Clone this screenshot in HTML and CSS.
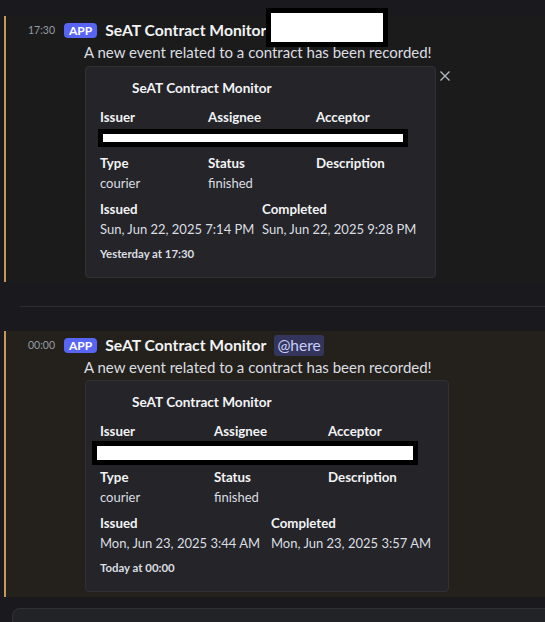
FILE: index.html
```html
<!DOCTYPE html>
<html>
<head>
<meta charset="utf-8">
<link rel="stylesheet" href="styles.css">
</head>
<body>
<div class="chat">
  <div class="spacer-top"></div>

  <div class="message m1">
    <div class="header">
      <span class="time">17:30</span>
      <span class="tag">APP</span>
      <span class="name">SeAT Contract Monitor</span>
    </div>
    <div class="redact redact-head"></div>
    <div class="content">A new event related to a contract has been recorded!</div>
    <div class="embed embed-a">
      <div class="author">SeAT Contract Monitor</div>
      <div class="fields">
        <div class="field third"><div class="fname">Issuer</div><div class="fval"></div></div>
        <div class="field third"><div class="fname">Assignee</div><div class="fval"></div></div>
        <div class="field third"><div class="fname">Acceptor</div><div class="fval"></div></div>
        <div class="field third"><div class="fname">Type</div><div class="fval">courier</div></div>
        <div class="field third"><div class="fname">Status</div><div class="fval">finished</div></div>
        <div class="field third"><div class="fname">Description</div><div class="fval"></div></div>
        <div class="field half"><div class="fname">Issued</div><div class="fval">Sun, Jun 22, 2025 7:14 PM</div></div>
        <div class="field half"><div class="fname">Completed</div><div class="fval">Sun, Jun 22, 2025 9:28 PM</div></div>
      </div>
      <div class="footer">Yesterday at 17:30</div>
      <div class="redact redact-a"></div>
      <button class="close" aria-label="Remove embed">
        <svg width="12" height="12" viewBox="0 0 12 12"><path d="M1.5 1.5L10.5 10.5M10.5 1.5L1.5 10.5" stroke="#b5bac1" stroke-width="1.3" fill="none"/></svg>
      </button>
    </div>
  </div>

  <div class="divider"><div class="line"></div></div>

  <div class="message m2">
    <div class="header">
      <span class="time">00:00</span>
      <span class="tag">APP</span>
      <span class="name">SeAT Contract Monitor</span>
      <span class="mention">@here</span>
    </div>
    <div class="content">A new event related to a contract has been recorded!</div>
    <div class="embed embed-b">
      <div class="author">SeAT Contract Monitor</div>
      <div class="fields">
        <div class="field third"><div class="fname">Issuer</div><div class="fval"></div></div>
        <div class="field third"><div class="fname">Assignee</div><div class="fval"></div></div>
        <div class="field third"><div class="fname">Acceptor</div><div class="fval"></div></div>
        <div class="field third"><div class="fname">Type</div><div class="fval">courier</div></div>
        <div class="field third"><div class="fname">Status</div><div class="fval">finished</div></div>
        <div class="field third"><div class="fname">Description</div><div class="fval"></div></div>
        <div class="field half"><div class="fname">Issued</div><div class="fval">Mon, Jun 23, 2025 3:44 AM</div></div>
        <div class="field half"><div class="fname">Completed</div><div class="fval">Mon, Jun 23, 2025 3:57 AM</div></div>
      </div>
      <div class="footer">Today at 00:00</div>
      <div class="redact redact-b"></div>
    </div>
  </div>

  <div class="composer"></div>
</div>
</body>
</html>
```
FILE: styles.css
```css
* { box-sizing: border-box; }

body {
  margin: 0;
  width: 545px;
  height: 622px;
  overflow: hidden;
  background: #1a1a1e;
  font-family: Lato, "Noto Sans", sans-serif;
  color: #dbdee1;
}

.chat {
  display: flex;
  flex-direction: column;
  height: 622px;
}

.spacer-top { height: 16px; flex: none; }

.message {
  position: relative;
  margin-left: 4px;
  border-left: 2px solid #c9975b;
  flex: none;
}
.message.m1 { background: #1c1b1c; padding: 3px 0 4px 0; }
.message.m2 { background: #24211c; padding: 3px 0 5px 0; }

.header {
  display: flex;
  align-items: center;
  height: 22px;
}

.time {
  width: 49px;
  text-align: right;
  font-size: 10.5px;
  color: #949ba4;
}

.tag {
  margin-left: 9px;
  height: 15px;
  padding: 0 5px;
  border-radius: 4px;
  background: #5865f2;
  color: #ffffff;
  font-size: 12px;
  font-weight: 700;
  line-height: 15px;
}

.name {
  margin-left: 8px;
  font-size: 15.7px;
  font-weight: 700;
  color: #f2f3f5;
}

.mention {
  margin-left: 8px;
  padding: 0 3px;
  height: 21px;
  line-height: 21px;
  border-radius: 3px;
  background: rgba(88, 101, 242, 0.3);
  color: #c9cdfb;
  font-size: 15.5px;
}

.content {
  padding-left: 78px;
  font-size: 15px;
  line-height: 22px;
  color: #dbdee1;
}

.embed {
  position: relative;
  margin-left: 79px;
  background: #242429;
  border: 1px solid #303137;
  border-radius: 4px;
  padding: 10px 19px 15px 14px;
}
.m1 .embed { margin-top: 3px; }
.m2 .embed { margin-top: 2px; }
.embed-a { width: 351px; }
.embed-b { width: 364px; padding-right: 14px; }

.author {
  margin-left: 32px;
  font-size: 13.6px;
  font-weight: 700;
  line-height: 22px;
  color: #f2f3f5;
}

.fields {
  display: grid;
  grid-template-columns: repeat(12, minmax(0, 1fr));
  column-gap: 8px;
  row-gap: 8px;
  margin-top: 9px;
}
.field.third { grid-column: span 4; }
.field.half { grid-column: span 6; }

.fname {
  font-size: 13.3px;
  font-weight: 700;
  line-height: 18px;
  margin-bottom: 2px;
  color: #f2f3f5;
  white-space: nowrap;
}
.fval {
  font-size: 13px;
  line-height: 18px;
  min-height: 18px;
  color: #dbdee1;
  white-space: nowrap;
}

.footer {
  margin-top: 8px;
  font-size: 11.4px;
  font-weight: 700;
  line-height: 16px;
  color: #dbdee1;
}

.redact {
  position: absolute;
  background: #ffffff;
  border: 5px solid #000000;
}
.redact-head { left: 260px; top: -8px; width: 122px; height: 39px; }
.redact-a { left: 12px; top: 62px; width: 310px; height: 18px; }
.redact-b { left: 6px; top: 60px; width: 326px; height: 24px; }

.close {
  position: absolute;
  left: calc(100% + 3px);
  top: 2px;
  width: 14px;
  height: 14px;
  padding: 1px;
  border: 0;
  background: transparent;
  display: flex;
}

.divider {
  flex: none;
  height: 49px;
  padding-top: 24px;
  margin-left: 20px;
}
.divider .line { height: 1px; background: #2c2d32; }

.composer {
  flex: 1;
  margin: 11px 0 0 12px;
  background: #222327;
  border-top: 1px solid #2f3035;
  border-left: 1px solid #2f3035;
  border-top-left-radius: 8px;
}
```
